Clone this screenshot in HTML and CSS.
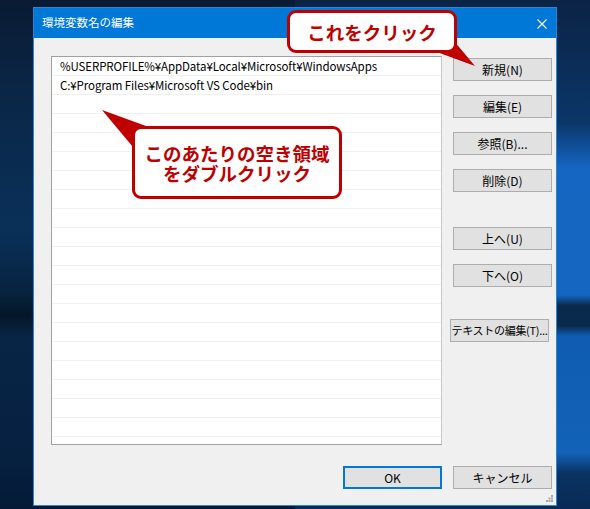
FILE: index.html
```html
<!DOCTYPE html>
<html lang="ja">
<head>
<meta charset="utf-8">
<title>環境変数名の編集</title>
<link rel="stylesheet" href="styles.css">
</head>
<body>
<div class="desktop">
  <div class="window">
    <div class="titlebar">
      <span class="title">環境変数名の編集</span>
      <svg class="close" width="10" height="10" viewBox="0 0 10 10"><path d="M0.5 0.5 L9.5 9.5 M9.5 0.5 L0.5 9.5" stroke="#fff" stroke-width="1.1" fill="none"/></svg>
    </div>
    <div class="content">
      <div class="list">
        <div class="row">%USERPROFILE%¥AppData¥Local¥Microsoft¥WindowsApps</div>
        <div class="row">C:¥Program Files¥Microsoft VS Code¥bin</div>
      </div>
      <div class="side">
        <button class="btn">新規(N)</button>
        <button class="btn">編集(E)</button>
        <button class="btn">参照(B)...</button>
        <button class="btn">削除(D)</button>
        <button class="btn group">上へ(U)</button>
        <button class="btn">下へ(O)</button>
        <button class="btn group text-edit">テキストの編集(T)...</button>
      </div>
      <div class="footer">
        <button class="btn default">OK</button>
        <button class="btn">キャンセル</button>
      </div>
    </div>
    <svg class="grip" width="7" height="7" viewBox="0 0 7 7" fill="#a8a8a8">
      <rect x="5" y="0" width="2" height="2"/>
      <rect x="2.5" y="2.5" width="2" height="2"/><rect x="5" y="2.5" width="2" height="2"/>
      <rect x="0" y="5" width="2" height="2"/><rect x="2.5" y="5" width="2" height="2"/><rect x="5" y="5" width="2" height="2"/>
    </svg>
  </div>
  <svg class="tails" width="590" height="509" viewBox="0 0 590 509">
    <polygon points="475,66 437,21 407,41" fill="#c00000"/>
    <polygon points="102,110 168,134 148,165" fill="#c00000"/>
  </svg>
  <div class="callout callout-new">これをクリック</div>
  <div class="callout callout-area">このあたりの空き領域<br>をダブルクリック</div>
</div>
</body>
</html>
```

FILE: styles.css
```css
* { box-sizing: border-box; }
html, body { margin: 0; padding: 0; }
body {
  width: 590px;
  height: 509px;
  overflow: hidden;
  font-family: "Noto Sans CJK JP", "Noto Sans", sans-serif;
}
.desktop {
  position: relative;
  width: 590px;
  height: 509px;
  padding: 7px 0 0 33px;
  background:
    linear-gradient(to bottom, #0b2345 0%, #0b3668 24%, #1566c2 33%, #1466c0 58%, #0a2a4c 60%, #0a2a4c 64%, #0f5cb2 66%, #1262b8 89%, #0a3360 93%, #082a55 100%) right top / 50% 100% no-repeat,
    linear-gradient(to bottom, #0a1b33 0%, #0a2748 20%, #0a3058 45%, #072441 57%, #041628 62%, #082546 66%, #062040 90%, #041a36 100%) left top / 50% 100% no-repeat;
}
.window {
  position: relative;
  width: 524px;
  height: 499px;
  border: 1px solid #2a86dc;
  background: #f0f0f0;
  display: flex;
  flex-direction: column;
}
.titlebar {
  height: 30px;
  background: #0078d7;
  display: flex;
  align-items: center;
  justify-content: space-between;
  padding: 0 9px 0 8px;
  flex: none;
}
.title {
  color: #fff;
  font-size: 11.5px;
  line-height: 1;
}
.close { display: block; margin-top: 1px; }
.content {
  flex: 1;
  display: grid;
  grid-template-columns: 391px 99px;
  grid-template-rows: 389px auto;
  column-gap: 11px;
  row-gap: 21px;
  padding: 18px 0 0 17px;
}
.list {
  border: 1px solid #a0a0a0;
  border-right-color: #c8c8c8;
  background: repeating-linear-gradient(to bottom, #fff 0 18px, #f0f0f0 18px 19px);
  background-size: 100% 380px;
  background-repeat: no-repeat;
  background-color: #fff;
}
.row {
  height: 19px;
  line-height: 19px;
  padding-left: 8px;
  font-size: 11.5px;
  letter-spacing: -0.1px;
  color: #000;
  white-space: nowrap;
}
.side {
  display: flex;
  flex-direction: column;
  align-items: flex-start;
  gap: 14px;
  padding-top: 2px;
}
.btn {
  width: 99px;
  height: 23px;
  margin: 0;
  padding: 0;
  background: #e1e1e1;
  border: 1px solid #adadad;
  border-radius: 0;
  font-family: "Noto Sans CJK JP", "Noto Sans", sans-serif;
  font-size: 12px;
  line-height: 1;
  color: #000;
  flex: none;
}
.btn.group { margin-top: 21px; }
.btn.text-edit {
  margin-top: 18px;
  margin-left: -3px;
  white-space: nowrap;
  font-size: 11px;
  letter-spacing: -0.3px;
}
.footer {
  grid-column: 1 / span 2;
  display: flex;
  justify-content: flex-end;
  gap: 11px;
}
.btn.default {
  border: 2px solid #0078d7;
}
.grip {
  position: absolute;
  right: 3px;
  bottom: 3px;
}
.tails {
  position: absolute;
  left: 0;
  top: 0;
}
.callout {
  position: absolute;
  background: #fff;
  border: 3px solid #c00000;
  border-radius: 9px;
  color: #c00000;
  font-weight: bold;
  font-size: 18.5px;
  line-height: 20px;
  display: flex;
  align-items: center;
  justify-content: center;
  text-align: center;
}
.callout-new {
  left: 287px;
  top: 10px;
  width: 170px;
  height: 43px;
}
.callout-area {
  left: 132px;
  top: 126px;
  width: 210px;
  height: 73px;
}
```
